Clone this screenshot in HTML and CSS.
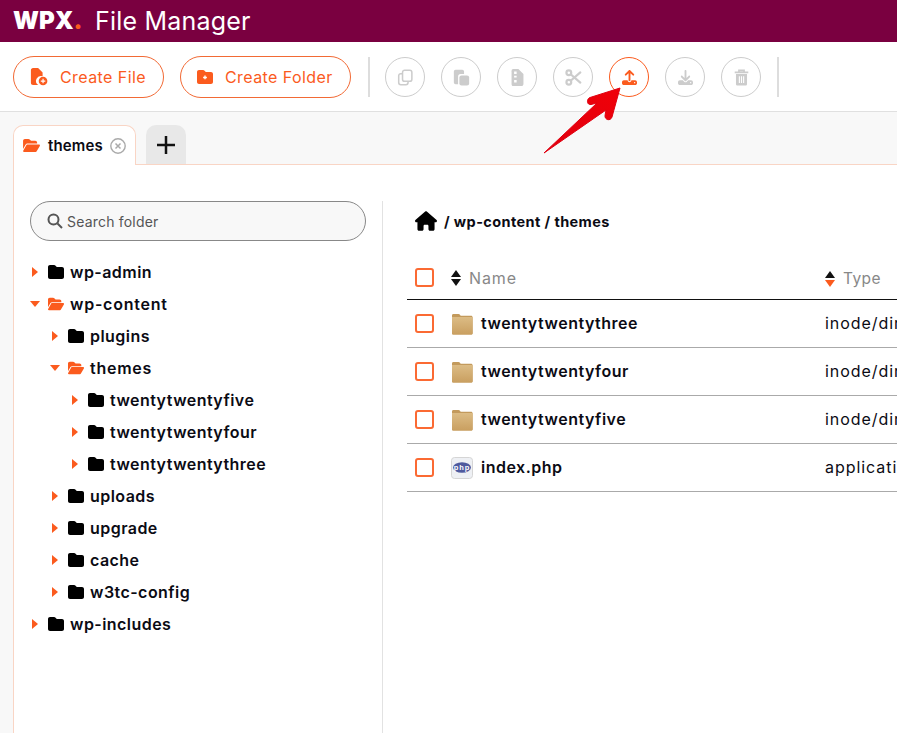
FILE: index.html
```html
<!DOCTYPE html>
<html lang="en">
<head>
    <meta charset="UTF-8">
    <meta name="viewport" content="width=device-width, initial-scale=1.0">
    <title>File Manager</title>
    <link rel="stylesheet" href="styles.css">
</head>
<body>
    <svg class="defs" width="0" height="0">
        <symbol id="folder" viewBox="0 0 512 512"><path d="M64 480H448c35.3 0 64-28.7 64-64V160c0-35.3-28.7-64-64-64H288c-10.1 0-19.6-4.7-25.6-12.8L243.2 58.1C231.1 41.97 212.1 32 192 32H64C28.7 32 0 60.7 0 96V416c0 35.3 28.7 64 64 64z"/></symbol>
        <symbol id="folder-open" viewBox="0 0 576 512"><path d="M88.7 223.8L0 375.8V96C0 60.7 28.7 32 64 32H181.5c17 0 33.3 6.7 45.3 18.7l26.5 26.5c12 12 28.3 18.7 45.3 18.7H416c35.3 0 64 28.7 64 64v32H144c-22.8 0-43.8 12.1-55.3 31.8zm27.6 16.1C122.1 230 132.6 224 144 224H544c11.5 0 22 6.1 27.7 16.1s5.7 22.2-.1 32.1l-112 192C453.9 474 443.4 480 432 480H32c-11.5 0-22-6.1-27.7-16.1s-5.7-22.2 .1-32.1l112-192z"/></symbol>
        <symbol id="tan" viewBox="0 0 22 22"><path d="M1 2.500C1 1.500 1.600 1 2.500 1h5c.8 0 1.200.3 1.600.9l.6.9H20c1 0 1.600.6 1.600 1.500V20c0 1-.6 1.500-1.600 1.500H2.500C1.600 21.500 1 21 1 20z" fill="#c39a5c"/><path d="M1 4h20.600v16c0 1-.6 1.500-1.600 1.500H2.500C1.600 21.500 1 21 1 20z" fill="url(#tangrad)"/><defs><linearGradient id="tangrad" x1="0" y1="0" x2="0" y2="1"><stop offset="0" stop-color="#dcbc85"/><stop offset="1" stop-color="#c99f60"/></linearGradient></defs></symbol>
    </svg>

    <header class="top-bar">
        <span class="logo">WPX<i>.</i></span>
        <span class="app-title">File Manager</span>
    </header>

    <div class="toolbar">
        <button class="btn">
            <svg class="btn-icon" viewBox="0 0 20 20"><path d="M1 2.500C1 1.100 2 0 3.400 0H9l5 5v4.200a5.500 5.500 0 0 0-4.800 9.800H3.400C2 19 1 18 1 16.500z" fill="#fb5b1e"/><circle cx="14.500" cy="14.500" r="4.800" fill="#fb5b1e"/><path d="M14.500 12v5M12 14.500h5" stroke="#fff" stroke-width="1.300"/></svg>
            Create File
        </button>
        <button class="btn">
            <svg class="btn-icon small" viewBox="0 0 512 512"><path fill="#fb5b1e" d="M64 480H448c35.300 0 64-28.700 64-64V160c0-35.300-28.700-64-64-64H288c-10.100 0-19.600-4.700-25.600-12.800L243.200 58.100C231.100 41.970 212.100 32 192 32H64C28.700 32 0 60.700 0 96V416c0 35.300 28.700 64 64 64z"/><path d="M256 210v120M196 270h120" stroke="#fff" stroke-width="44"/></svg>
            Create Folder
        </button>
        <span class="divider"></span>
        <div class="tools">
            <span class="circle"><svg viewBox="0 0 20 20"><rect x="6.500" y="1.500" width="11" height="13" rx="2.500" fill="none" stroke="#ccc" stroke-width="1.800"/><path d="M6 5.500H4.500C3 5.500 2 6.500 2 8v8c0 1.500 1 2.500 2.500 2.500h6c1.500 0 2.500-1 2.500-2.500v-1" fill="none" stroke="#ccc" stroke-width="1.800"/></svg></span>
            <span class="circle"><svg viewBox="0 0 20 20" fill="#ccc"><path d="M3 1h8c1 0 2 1 2 2v3H9c-2 0-3 1-3 3v9H3c-1 0-2-1-2-2V3c0-1 1-2 2-2z"/><rect x="7.500" y="7.500" width="11.500" height="12" rx="2.500"/></svg></span>
            <span class="circle"><svg viewBox="0 0 20 20" fill="#ccc"><path d="M5 0h6l6 6v11.500c0 1.400-1 2.500-2.500 2.500h-9.500C3.600 20 3 19 3 17.500V2.500C3 1 3.600 0 5 0z"/><path d="M6 3h3v3H6zM6 8h3v2H6zM6 13h3v3H6z" fill="#fff"/></svg></span>
            <span class="circle"><svg viewBox="0 0 20 20" fill="none" stroke="#ccc" stroke-width="2.600"><circle cx="4.500" cy="4.500" r="2.800"/><circle cx="4.500" cy="15.500" r="2.800"/><path d="M7 6.500l11 9.500M7 13.500L18 4" stroke-linecap="round"/></svg></span>
            <span class="circle on fa"><svg viewBox="0 0 512 512"><path fill="#fb5b1e" d="M288 109.300V352c0 17.700-14.300 32-32 32s-32-14.300-32-32V109.300l-73.400 73.400c-12.500 12.500-32.800 12.500-45.300 0s-12.500-32.800 0-45.300l128-128c12.500-12.500 32.800-12.500 45.300 0l128 128c12.500 12.500 12.500 32.800 0 45.300s-32.800 12.500-45.300 0L288 109.300zM64 352H192c0 35.300 28.700 64 64 64s64-28.700 64-64H448c35.300 0 64 28.700 64 64v32c0 35.300-28.700 64-64 64H64c-35.300 0-64-28.700-64-64V416c0-35.300 28.700-64 64-64zM432 456a24 24 0 1 0 0-48 24 24 0 1 0 0 48z"/></svg></span>
            <span class="circle fa"><svg viewBox="0 0 512 512"><path fill="#ccc" d="M288 32c0-17.700-14.300-32-32-32s-32 14.300-32 32V274.700l-73.400-73.400c-12.500-12.500-32.800-12.500-45.300 0s-12.500 32.800 0 45.300l128 128c12.500 12.500 32.800 12.500 45.300 0l128-128c12.500-12.500 12.500-32.800 0-45.300s-32.800-12.500-45.300 0L288 274.700V32zM64 352c-35.300 0-64 28.700-64 64v32c0 35.300 28.700 64 64 64H448c35.300 0 64-28.700 64-64V416c0-35.300-28.700-64-64-64H346.500l-45.300 45.300c-25 25-65.500 25-90.500 0L165.500 352H64zm368 56a24 24 0 1 1 0 48 24 24 0 1 1 0-48z"/></svg></span>
            <span class="circle"><svg viewBox="0 0 20 20"><path d="M2 4h16M7 3.500V1.500h6v2" fill="none" stroke="#ccc" stroke-width="2"/><path d="M3.500 6h13v11.500c0 1.200-.8 2-2 2h-9c-1.200 0-2-.8-2-2z" fill="#ccc"/><path d="M7.500 8.500v8M10 8.500v8M12.500 8.500v8" stroke="#fff" stroke-width="1.300"/></svg></span>
        </div>
        <span class="divider"></span>
    </div>

    <div class="tabs">
        <div class="tab active">
            <svg class="tab-folder"><use href="#folder-open"/></svg>
            <b>themes</b>
            <svg class="tab-close" viewBox="0 0 16 16" fill="none" stroke="#aaa"><circle cx="8" cy="8" r="7.200" stroke-width="1.400"/><path d="M5.500 5.500l5 5M10.500 5.500l-5 5" stroke-width="1.500"/></svg>
        </div>
        <div class="tab add">
            <svg viewBox="0 0 18 18" width="18" height="18"><path d="M9 0v18M0 9h18" stroke="#111" stroke-width="2.500"/></svg>
        </div>
    </div>

    <main class="panel">
        <aside class="sidebar">
            <div class="search">
                <svg viewBox="0 0 16 16" width="16" height="16" fill="none" stroke="#555" stroke-width="2"><circle cx="6.500" cy="6.500" r="5"/><path d="M10.500 10.500l4.500 4.500"/></svg>
                <span>Search folder</span>
            </div>
            <ul class="tree">
                <li><div class="node"><i class="caret"></i><svg class="f"><use href="#folder"/></svg>wp-admin</div></li>
                <li>
                    <div class="node open"><i class="caret"></i><svg class="f"><use href="#folder-open"/></svg>wp-content</div>
                    <ul>
                        <li><div class="node"><i class="caret"></i><svg class="f"><use href="#folder"/></svg>plugins</div></li>
                        <li>
                            <div class="node open"><i class="caret"></i><svg class="f"><use href="#folder-open"/></svg>themes</div>
                            <ul>
                                <li><div class="node"><i class="caret"></i><svg class="f"><use href="#folder"/></svg>twentytwentyfive</div></li>
                                <li><div class="node"><i class="caret"></i><svg class="f"><use href="#folder"/></svg>twentytwentyfour</div></li>
                                <li><div class="node"><i class="caret"></i><svg class="f"><use href="#folder"/></svg>twentytwentythree</div></li>
                            </ul>
                        </li>
                        <li><div class="node"><i class="caret"></i><svg class="f"><use href="#folder"/></svg>uploads</div></li>
                        <li><div class="node"><i class="caret"></i><svg class="f"><use href="#folder"/></svg>upgrade</div></li>
                        <li><div class="node"><i class="caret"></i><svg class="f"><use href="#folder"/></svg>cache</div></li>
                        <li><div class="node"><i class="caret"></i><svg class="f"><use href="#folder"/></svg>w3tc-config</div></li>
                    </ul>
                </li>
                <li><div class="node"><i class="caret"></i><svg class="f"><use href="#folder"/></svg>wp-includes</div></li>
            </ul>
        </aside>

        <section class="files">
            <div class="crumbs">
                <svg viewBox="0 0 576 512" width="22" height="20"><path d="M575.800 255.500c0 18-15 32.100-32 32.100h-32l.7 160.200c0 2.700-.2 5.400-.5 8.100V472c0 22.100-17.900 40-40 40H456c-1.100 0-2.200 0-3.300-.1c-1.400 .1-2.800 .1-4.200 .1H416 392c-22.100 0-40-17.900-40-40V448 384c0-17.700-14.300-32-32-32H256c-17.700 0-32 14.300-32 32v64 24c0 22.100-17.900 40-40 40H160 128.100c-1.500 0-3-.1-4.500-.2c-1.200 .1-2.400 .2-3.600 .2H104c-22.100 0-40-17.900-40-40V360c0-.9 0-1.900 .1-2.800V287.600H32c-18 0-32-14-32-32.100c0-9 3-17 10-24L266.400 8c7-7 15-8 22-8s15 2 21 7L564.800 231.500c8 7 12 15 11 24z"/></svg>
                <b>/ wp-content / themes</b>
            </div>
            <div class="row head">
                <span class="check"></span>
                <span class="name"><span class="sort"><i class="up"></i><i class="down"></i></span>Name</span>
                <span class="type"><span class="sort"><i class="up"></i><i class="down hot"></i></span>Type</span>
            </div>
            <div class="row">
                <span class="check"></span>
                <span class="name"><svg class="thumb"><use href="#tan"/></svg><b>twentytwentythree</b></span>
                <span class="type">inode/directory</span>
            </div>
            <div class="row">
                <span class="check"></span>
                <span class="name"><svg class="thumb"><use href="#tan"/></svg><b>twentytwentyfour</b></span>
                <span class="type">inode/directory</span>
            </div>
            <div class="row">
                <span class="check"></span>
                <span class="name"><svg class="thumb"><use href="#tan"/></svg><b>twentytwentyfive</b></span>
                <span class="type">inode/directory</span>
            </div>
            <div class="row">
                <span class="check"></span>
                <span class="name">
                    <svg class="thumb" viewBox="0 0 22 22"><rect x=".5" y=".5" width="21" height="21" rx="3" fill="#eef0f4" stroke="#d5d5d5"/><ellipse cx="11" cy="10.500" rx="9" ry="5.200" fill="#4f5a9e"/><text x="11" y="13" class="php-mark">php</text></svg>
                    <b>index.php</b>
                </span>
                <span class="type">application/x-php</span>
            </div>
        </section>
    </main>

    <svg class="pointer" viewBox="0 0 100 80" width="100" height="80">
        <defs><linearGradient id="red" x1="0" y1="1" x2="1" y2="0"><stop offset="0" stop-color="#e00010"/><stop offset="1" stop-color="#f00008"/></linearGradient></defs>
        <path d="M1 74L54 24 48 25.500C44 26.500 43 20 47 18.500L77 9 69 38C67.500 42.500 61.500 41 62 36.500L63 31z" fill="url(#red)" stroke="#e00010" stroke-linejoin="round"/>
    </svg>
</body>
</html>
```

FILE: styles.css
```css
*{
    box-sizing: border-box;
}
html,body{
    height: 733px;
    overflow: hidden;
}
body{
    margin: 0;
    display: flex;
    flex-direction: column;
    position: relative;
    background-color: #f8f8f8;
    color: #0b0b14;
    font-family: "Inter", "Liberation Sans", sans-serif;
    font-size: 16px;
}
.defs{
    position: absolute;
}
ul{
    list-style: none;
    margin: 0;
    padding: 0;
}
.top-bar{
    display: flex;
    align-items: center;
    height: 42px;
    padding-left: 13px;
    padding-bottom: 1px;
    background-color: #7a0040;
    color: white;
}
.logo{
    width: 82px;
    font-size: 24px;
    font-weight: 900;
}
.logo>i{
    color: #fb5b1e;
    font-style: normal;
}
.app-title{
    font-size: 25px;
    font-weight: 400;
    letter-spacing: 0.2px;
}
.toolbar{
    display: flex;
    align-items: center;
    flex: none;
    height: 70px;
    padding-left: 13px;
    padding-top: 1px;
    background-color: white;
    border-bottom: 1px solid #e0e0e0;
}
.btn{
    flex: none;
    display: flex;
    align-items: center;
    gap: 12px;
    height: 42px;
    margin-right: 16px;
    padding: 0 0 0 16px;
    width: 151px;
    background-color: white;
    border: 1px solid #f26a35;
    border-radius: 21px;
    color: #fb5b1e;
    font-family: inherit;
    font-size: 16px;
    letter-spacing: 0.42px;
}
.btn+.btn{
    width: 171px;
    margin-right: 17px;
}
.btn-icon{
    width: 18px;
    height: 18px;
}
.btn-icon.small{
    width: 16px;
    height: 16px;
}
.divider{
    width: 2px;
    height: 40px;
    background-color: #ddd;
}
.tools{
    display: flex;
    gap: 16px;
    margin: 0 16px 0 15px;
}
.circle{
    display: flex;
    align-items: center;
    justify-content: center;
    width: 40px;
    height: 40px;
    border: 1px solid #ccc;
    border-radius: 50%;
}
.circle.on{
    border-color: #fb5b1e;
}
.circle>svg{
    width: 17px;
    height: 17px;
}
.circle.fa>svg{
    width: 15px;
    height: 15px;
}
.tabs{
    display: flex;
    flex: none;
    gap: 10px;
    height: 40px;
    margin-top: 13px;
    padding-left: 13px;
}
.tab{
    display: flex;
    align-items: center;
    height: 40px;
    border-radius: 10px 10px 0 0;
}
.tab.active{
    position: relative;
    z-index: 1;
    width: 123px;
    padding-left: 9px;
    background-color: white;
    border: 1px solid #f9d5c5;
    border-bottom: none;
}
.tab.add{
    justify-content: center;
    width: 40px;
    height: 39px;
    background-color: #e8e8e8;
}
.tab-folder{
    width: 17px;
    height: 15px;
    fill: #fb5b1e;
}
.tab b{
    margin-left: 8px;
    font-size: 15px;
    font-weight: 600;
    letter-spacing: 0.15px;
}
.tab-close{
    width: 16px;
    height: 16px;
    margin-left: 7px;
}
.panel{
    flex: 1;
    display: flex;
    min-height: 0;
    margin-top: -1px;
    margin-left: 13px;
    padding-top: 36px;
    background-color: white;
    border-top: 1px solid #f9d5c5;
    border-left: 1px solid #f9d5c5;
}
.sidebar{
    flex: none;
    width: 369px;
    padding: 0 16px;
    border-right: 1px solid #e2e2e2;
}
.search{
    display: flex;
    align-items: center;
    gap: 4px;
    height: 40px;
    padding-left: 16px;
    background-color: #f8f8f8;
    border: 1px solid #888;
    border-radius: 20px;
    color: #555;
    font-size: 14px;
    letter-spacing: 0.2px;
}
.tree{
    margin-top: 15px;
}
.tree ul{
    padding-left: 20px;
}
.node{
    display: flex;
    align-items: center;
    height: 32px;
    font-weight: 600;
    letter-spacing: 0.45px;
}
.open{
    letter-spacing: 0.75px;
}
.caret{
    width: 0;
    height: 0;
    margin: 0 10px 0 2px;
    border-top: 5px solid transparent;
    border-bottom: 5px solid transparent;
    border-left: 6px solid #fb5b1e;
}
.open>.caret{
    margin: 0 8px 0 0;
    border-left: 5px solid transparent;
    border-right: 5px solid transparent;
    border-top: 6px solid #fb5b1e;
    border-bottom: none;
}
.f{
    width: 16px;
    height: 16px;
    margin-right: 6px;
}
.open>.f{
    fill: #fb5b1e;
}
.files{
    flex: none;
    width: 600px;
    padding-left: 24px;
}
.crumbs{
    display: flex;
    align-items: center;
    gap: 7px;
    height: 40px;
    padding-left: 8px;
}
.crumbs>b{
    font-size: 14.5px;
    font-weight: 700;
    letter-spacing: 0.4px;
}
.row{
    display: flex;
    align-items: center;
    height: 48px;
    padding-left: 8px;
    border-bottom: 1px solid #aaa;
}
.row.head{
    height: 59px;
    padding-top: 15px;
    border-bottom-color: #111;
    color: #888;
}
.check{
    flex: none;
    width: 19px;
    height: 19px;
    margin-right: 17px;
    border: 2px solid #fb6a33;
    border-radius: 3px;
}
.name{
    flex: none;
    display: flex;
    align-items: center;
    width: 374px;
    letter-spacing: 0.9px;
}
.name>b{
    margin-bottom: 2px;
    font-weight: 600;
    letter-spacing: 0.5px;
}
.type{
    display: flex;
    align-items: center;
    margin-bottom: 2px;
    font-size: 16px;
    white-space: nowrap;
    letter-spacing: 0.95px;
}
.head>.type{
    margin-top: 2px;
    margin-bottom: 0;
    font-size: 15.5px;
    letter-spacing: 0.4px;
}
.sort{
    display: flex;
    flex-direction: column;
    gap: 2px;
    margin-right: 8px;
}
.sort>i{
    width: 0;
    height: 0;
    border-left: 5.5px solid transparent;
    border-right: 5.5px solid transparent;
}
.sort>.up{
    border-bottom: 7px solid #111;
}
.sort>.down{
    border-top: 7px solid #111;
}
.sort>.hot{
    border-top-color: #fb5b1e;
}
.thumb{
    width: 22px;
    height: 22px;
    margin-right: 8px;
}
.php-mark{
    fill: white;
    font-family: "Liberation Sans", sans-serif;
    font-size: 7.5px;
    font-weight: 700;
    text-anchor: middle;
}
.pointer{
    position: absolute;
    left: 543px;
    top: 79px;
}
```
